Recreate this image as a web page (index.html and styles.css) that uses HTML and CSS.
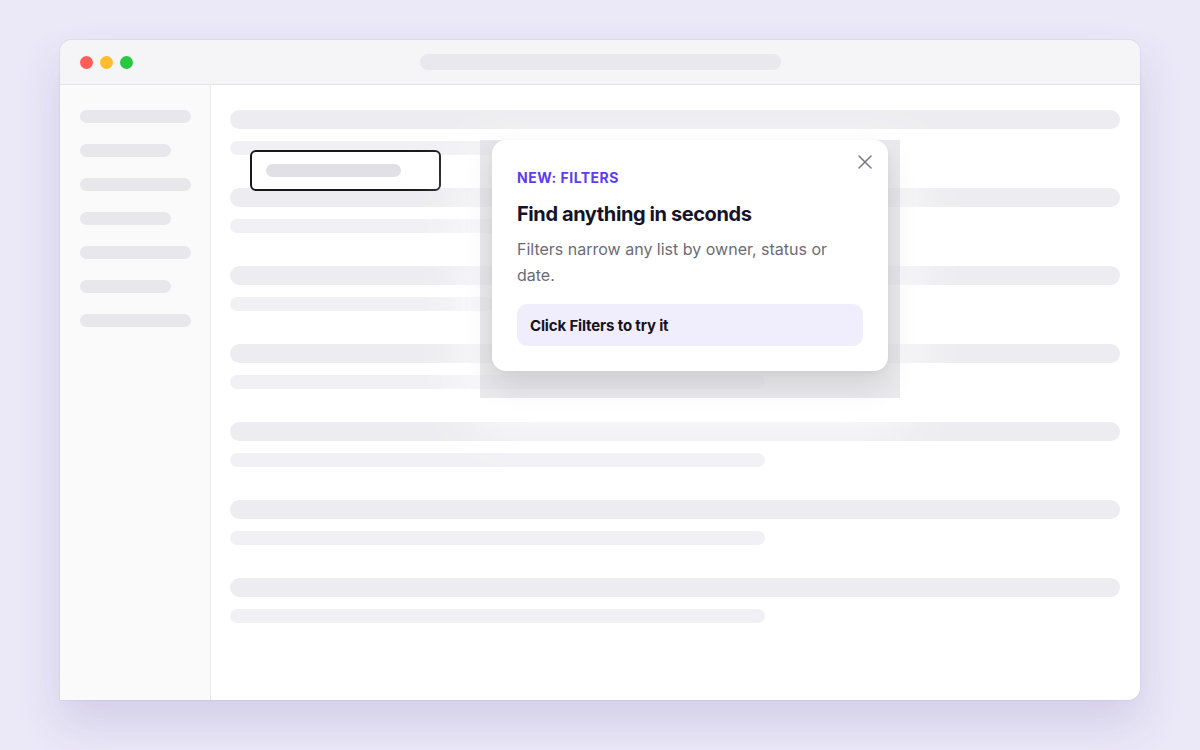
FILE: index.html
```html
<!DOCTYPE html>
<html lang="en">
<head>
<meta charset="utf-8">
<title>Filters tour</title>
<link rel="stylesheet" href="styles.css">
</head>
<body>
<div class="window">
  <div class="titlebar">
    <div class="lights">
      <span class="light red"></span>
      <span class="light yellow"></span>
      <span class="light green"></span>
    </div>
    <div class="address"></div>
  </div>
  <div class="body">
    <aside class="sidebar">
      <div class="nav long"></div>
      <div class="nav short"></div>
      <div class="nav long"></div>
      <div class="nav short"></div>
      <div class="nav long"></div>
      <div class="nav short"></div>
      <div class="nav long"></div>
    </aside>
    <main class="main">
      <div class="group"><div class="row-title"></div><div class="row-sub"></div></div>
      <div class="group"><div class="row-title"></div><div class="row-sub"></div></div>
      <div class="group"><div class="row-title"></div><div class="row-sub"></div></div>
      <div class="group"><div class="row-title"></div><div class="row-sub"></div></div>
      <div class="group"><div class="row-title"></div><div class="row-sub"></div></div>
      <div class="group"><div class="row-title"></div><div class="row-sub"></div></div>
      <div class="group"><div class="row-title"></div><div class="row-sub"></div></div>
    </main>
  </div>

  <div class="target"><div class="target-bar"></div></div>

  <div class="halo"></div>
  <div class="popover">
    <button class="close" aria-label="Close">
      <svg width="14" height="14" viewBox="0 0 14 14"><path d="M1 1 L13 13 M13 1 L1 13" stroke="currentColor" stroke-width="1.5" stroke-linecap="round" fill="none"/></svg>
    </button>
    <div class="label">NEW: FILTERS</div>
    <h2 class="title">Find anything in seconds</h2>
    <p class="desc">Filters narrow any list by owner, status or date.</p>
    <div class="hint">Click Filters to try it</div>
  </div>
</div>
</body>
</html>
```

FILE: styles.css
```css
* { box-sizing: border-box; }

html, body {
  margin: 0;
  padding: 0;
}

body {
  width: 1200px;
  height: 750px;
  background: #ebe8f8;
  font-family: Inter, Roboto, "Liberation Sans", sans-serif;
  overflow: hidden;
  padding: 40px 60px 0;
}

.window {
  position: relative;
  width: 1080px;
  height: 660px;
  background: #ffffff;
  border-radius: 12px 12px 12px 0;
  box-shadow: 0 22px 44px rgba(80, 70, 140, 0.16), 0 0 0 1px rgba(40, 30, 90, 0.05);
  display: flex;
  flex-direction: column;
}

.titlebar {
  height: 45px;
  flex: none;
  background: #f5f5f7;
  border-bottom: 1px solid #e2e2e8;
  border-radius: 12px 12px 0 0;
  display: flex;
  align-items: center;
  padding: 0 0 0 20px;
}

.lights {
  display: flex;
  gap: 7px;
  width: 340px;
}

.light {
  width: 13px;
  height: 13px;
  border-radius: 50%;
}
.red { background: #ff5f57; }
.yellow { background: #febc2e; }
.green { background: #28c840; }

.address {
  width: 361px;
  height: 16px;
  border-radius: 8px;
  background: #e8e8ed;
}

.body {
  flex: 1;
  display: flex;
  min-height: 0;
}

.sidebar {
  width: 151px;
  flex: none;
  background: #fafafa;
  border-right: 1px solid #ececef;
  padding: 25px 0 0 20px;
  display: flex;
  flex-direction: column;
  gap: 21px;
}

.nav {
  height: 13px;
  border-radius: 7px;
  background: #e7e7ec;
}
.nav.long { width: 111px; }
.nav.short { width: 91px; }

.main {
  flex: 1;
  padding: 25px 20px 0 19px;
  display: flex;
  flex-direction: column;
  gap: 33px;
}

.group {
  display: flex;
  flex-direction: column;
  gap: 12px;
}

.row-title {
  height: 19px;
  border-radius: 10px;
  background: #ededf1;
}

.row-sub {
  width: 535px;
  height: 14px;
  border-radius: 7px;
  background: #f1f1f5;
}

.target {
  position: absolute;
  left: 190px;
  top: 110px;
  width: 191px;
  height: 41px;
  border: 2px solid #18181b;
  border-radius: 6px;
  background: #ffffff;
  padding: 0 0 0 14px;
  display: flex;
  align-items: center;
}

.target-bar {
  width: 135px;
  height: 13px;
  border-radius: 7px;
  background: #e0e0e6;
}

.halo {
  position: absolute;
  left: 420px;
  top: 100px;
  width: 420px;
  height: 258px;
  background: rgba(226, 226, 230, 0.72);
  box-shadow: 0 20px 60px 6px rgba(255, 255, 255, 0.95);
}

.popover {
  position: absolute;
  left: 432px;
  top: 100px;
  width: 396px;
  background: #ffffff;
  border-radius: 14px;
  box-shadow: 0 14px 30px rgba(0, 0, 0, 0.1), 0 2px 6px rgba(0, 0, 0, 0.04);
  padding: 28px 25px 25px;
}

.close {
  position: absolute;
  top: 15px;
  right: 16px;
  width: 14px;
  height: 14px;
  padding: 0;
  border: 0;
  background: none;
  color: #767687;
  display: flex;
}

.label {
  font-size: 14px;
  line-height: 20px;
  font-weight: 700;
  letter-spacing: 0.5px;
  color: #5b3ef0;
}

.title {
  margin: 12px 0 0;
  font-size: 20px;
  line-height: 28px;
  font-weight: 700;
  letter-spacing: -0.4px;
  color: #15122a;
}

.desc {
  margin: 8px 0 0;
  font-size: 16px;
  line-height: 26px;
  color: #6b6b78;
}

.hint {
  margin-top: 16px;
  height: 42px;
  border-radius: 10px;
  background: #f0eefc;
  padding: 0 13px;
  display: flex;
  align-items: center;
  font-size: 15px;
  font-weight: 700;
  letter-spacing: -0.15px;
  color: #16131f;
}
```
